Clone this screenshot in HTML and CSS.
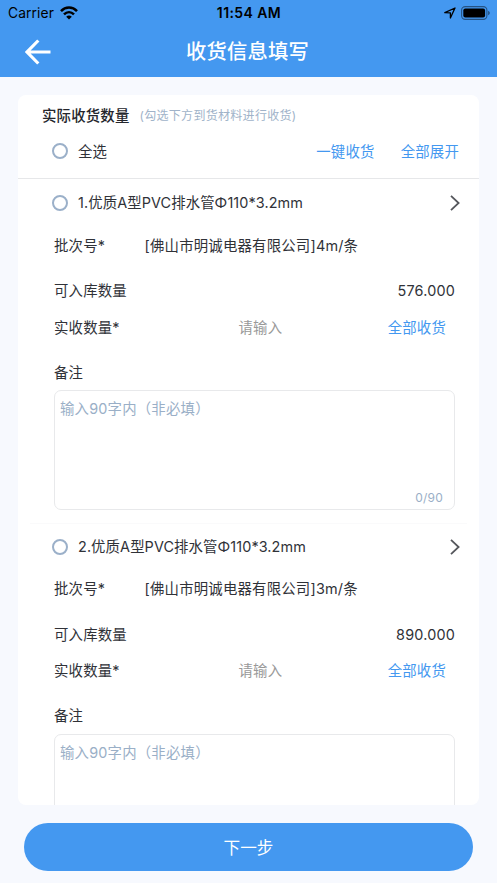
FILE: index.html
```html
<!DOCTYPE html>
<html lang="zh-CN">
<head>
<meta charset="utf-8">
<meta name="viewport" content="width=device-width, initial-scale=1">
<title>收货信息填写</title>
<link rel="stylesheet" href="styles.css">
</head>
<body>
<header class="top">
  <div class="status">
    <div class="carrier"><span>Carrier</span>
      <svg class="wifi" width="18" height="14" viewBox="0 0 18 14" fill="none" stroke="#000" stroke-width="2.5"><path d="M1 5.1C5.5.4 12.5.4 17 5.1M4 8.3c3-2.9 7-2.9 10 0"/><path d="M6.2 10.7c1.7-1.5 3.9-1.5 5.6 0L9 13.5z" fill="#000" stroke="none"/></svg>
    </div>
    <div class="clock">11:54 AM</div>
    <div class="indicators">
      <svg width="12" height="12" viewBox="0 0 12 12" fill="none" stroke="#000" stroke-width="1.3" stroke-linejoin="round"><path d="M.8 5.7 11 1 6.4 11V5.8z"/></svg>
      <svg width="29" height="14" viewBox="0 0 29 14"><rect x=".6" y=".6" width="25.3" height="12.8" rx="3.6" fill="none" stroke="#000" stroke-opacity=".45" stroke-width="1.1"/><rect x="2.3" y="2.5" width="21.8" height="9" rx="2" fill="#000"/><path d="M27.2 4.8c2 .8 2 3.6 0 4.4z" fill="#000" fill-opacity=".5"/></svg>
    </div>
  </div>
  <div class="nav">
    <svg class="back" width="27" height="26" viewBox="0 0 27 26" fill="none" stroke="#fff" stroke-width="3.2"><path d="M13.3 1.5 2 13l11.3 11.5M2.5 13h23"/></svg>
    <h1>收货信息填写</h1>
  </div>
</header>
<main class="card">
  <div class="card-head"><h2>实际收货数量</h2><span class="hint">(勾选下方到货材料进行收货)</span></div>
  <div class="select-row">
    <span class="radio"></span><span class="grow">全选</span>
    <a class="link">一键收货</a><a class="link">全部展开</a>
  </div>
  <section class="item">
    <div class="item-title"><span class="radio"></span><span class="grow">1.优质A型PVC排水管Φ110*3.2mm</span>
      <svg class="chevron" width="10" height="16" viewBox="0 0 10 16"><path d="M1 .8 8.6 8 1 15.2"/></svg></div>
    <div class="row batch"><span class="label">批次号*</span><span>[佛山市明诚电器有限公司]4m/条</span></div>
    <div class="row stock"><span class="label">可入库数量</span><span class="number">576.000</span></div>
    <div class="row received"><span class="label">实收数量*</span><span class="entry">请输入</span><a class="link">全部收货</a></div>
    <div class="row remark">备注</div>
    <div class="textbox"><span>输入90字内（非必填）</span><span class="count">0/90</span></div>
  </section>
  <section class="item">
    <div class="item-title"><span class="radio"></span><span class="grow">2.优质A型PVC排水管Φ110*3.2mm</span>
      <svg class="chevron" width="10" height="16" viewBox="0 0 10 16"><path d="M1 .8 8.6 8 1 15.2"/></svg></div>
    <div class="row batch"><span class="label">批次号*</span><span>[佛山市明诚电器有限公司]3m/条</span></div>
    <div class="row stock"><span class="label">可入库数量</span><span class="number">890.000</span></div>
    <div class="row received"><span class="label">实收数量*</span><span class="entry">请输入</span><a class="link">全部收货</a></div>
    <div class="row remark">备注</div>
    <div class="textbox"><span>输入90字内（非必填）</span></div>
  </section>
</main>
<footer><button class="next" type="button">下一步</button></footer>
</body>
</html>
```
FILE: styles.css
```css
* { box-sizing: border-box; }
body {
  margin: 0;
  height: 883px;
  display: flex;
  flex-direction: column;
  overflow: hidden;
  background: #f7f9fe;
  color: #303238;
  font: 14.4px/20px Inter, "Noto Sans CJK SC", sans-serif;
  letter-spacing: .2px;
  white-space: nowrap;
}
h1, h2 { margin: 0; }
svg { display: block; flex: none; }

.top { height: 77px; flex: none; background: #4498f0; }
.status {
  height: 26px;
  padding: 0 7px 0 8px;
  display: grid;
  grid-template-columns: 1fr auto 1fr;
  align-items: center;
  color: #000;
  font-size: 13.8px;
  letter-spacing: .1px;
}
.carrier { display: flex; align-items: center; gap: 6px; }
.clock { font-weight: 600; font-size: 14px; letter-spacing: .4px; }
.indicators { display: flex; align-items: center; justify-content: flex-end; gap: 5px; }
.nav {
  height: 51px;
  padding: 0 27px 0 25px;
  display: grid;
  grid-template-columns: 27px 1fr 27px;
  align-items: center;
}
.nav h1 {
  padding-top: 1px;
  color: #fff;
  font-size: 20.3px;
  font-weight: 500;
  line-height: 30px;
  letter-spacing: .2px;
  text-align: center;
}

.card {
  height: 710px;
  flex: none;
  margin: 18px 18px 0;
  background: #fff;
  border-radius: 8px;
  overflow: hidden;
}
.card-head { height: 37px; padding: 5px 24px 0; display: flex; align-items: center; }
.card-head h2 { font-size: 14.4px; font-weight: 500; line-height: 20px; color: #24262c; }
.hint { margin-left: 10px; color: #a0b3c9; font-size: 12px; letter-spacing: .3px; }
.select-row {
  height: 47px;
  padding: 0 20px 8px 34px;
  display: flex;
  align-items: center;
  border-bottom: 1px solid #e6e7e9;
}
.select-row .grow, .select-row .link { padding-top: 1px; }
.select-row .link + .link { margin-left: 26px; }
.radio {
  width: 16px;
  height: 16px;
  flex: none;
  margin-right: 10px;
  border: 2px solid #9bb0c9;
  border-radius: 50%;
}
.grow { flex: 1; }
.link { color: #4498f0; }

.item { height: 343.5px; padding: 0 24px 0 36px; }
.item-title {
  height: 48px;
  margin: 0 -6px 0 -2px;
  display: flex;
  align-items: center;
  letter-spacing: .1px;
}
.item + .item .item-title {
  margin: 0 -12px 0 -24px;
  padding: 0 6px 0 22px;
  border-top: 1px solid #fafafb;
}
.chevron { margin-right: 1px; fill: none; stroke: #55575c; stroke-width: 1.8; }
.row { display: flex; align-items: center; }
.label { width: 90.5px; flex: none; }
.batch { height: 37px; }
.stock { height: 36px; margin-top: 9px; justify-content: space-between; }
.received { height: 37px; padding-right: 9px; }
.entry { flex: 1; padding-left: 94px; color: #999; }
.remark { height: 29px; margin-top: 12px; }
.textbox {
  height: 120px;
  margin-top: 3px;
  padding: 8px 11px 1px 5px;
  display: flex;
  flex-direction: column;
  justify-content: space-between;
  border: 1px solid #e8e9eb;
  border-radius: 7px;
  color: #9aafc7;
}
.count { align-self: flex-end; font-size: 12px; }

footer { padding: 18px 24px 0; }
.next {
  display: block;
  width: 100%;
  height: 48px;
  border: 0;
  border-radius: 24px;
  background: #4498f0;
  color: #fff;
  font: 16.6px/24px "Noto Sans CJK SC", sans-serif;
}
```
